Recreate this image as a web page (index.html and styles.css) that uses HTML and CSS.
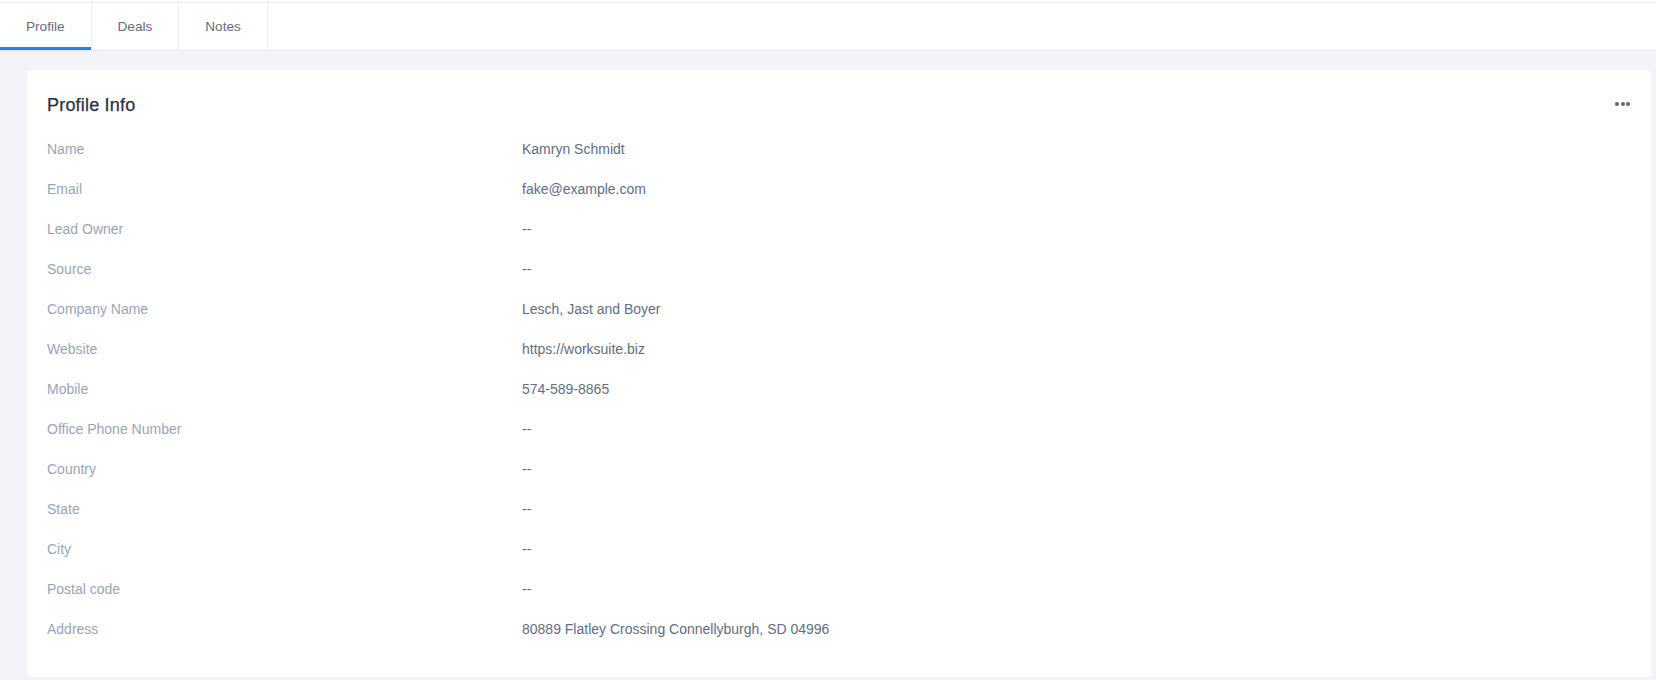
FILE: index.html
```html
<!DOCTYPE html>
<html>
<head>
<meta charset="utf-8">
<title>Profile</title>
<link rel="stylesheet" href="styles.css">
</head>
<body>
<header class="header">
  <nav class="tabs">
    <a class="tab active">Profile</a>
    <a class="tab">Deals</a>
    <a class="tab">Notes</a>
  </nav>
</header>
<main class="content">
  <section class="card">
    <div class="card-head">
      <h2 class="card-title">Profile Info</h2>
      <button class="more" aria-label="More">
        <span class="dot"></span><span class="dot"></span><span class="dot"></span>
      </button>
    </div>
    <dl class="info">
      <dt>Name</dt><dd>Kamryn Schmidt</dd>
      <dt>Email</dt><dd>fake@example.com</dd>
      <dt>Lead Owner</dt><dd>--</dd>
      <dt>Source</dt><dd>--</dd>
      <dt>Company Name</dt><dd>Lesch, Jast and Boyer</dd>
      <dt>Website</dt><dd>https://worksuite.biz</dd>
      <dt>Mobile</dt><dd>574-589-8865</dd>
      <dt>Office Phone Number</dt><dd>--</dd>
      <dt>Country</dt><dd>--</dd>
      <dt>State</dt><dd>--</dd>
      <dt>City</dt><dd>--</dd>
      <dt>Postal code</dt><dd>--</dd>
      <dt>Address</dt><dd>80889 Flatley Crossing Connellyburgh, SD 04996</dd>
    </dl>
  </section>
</main>
</body>
</html>
```

FILE: styles.css
```css
* { box-sizing: border-box; }
html, body { margin: 0; padding: 0; }
body {
  background: #f2f4f7;
  font-family: "Liberation Sans", Arial, Helvetica, sans-serif;
  font-size: 14px;
  color: #616e80;
  height: 680px;
  overflow: hidden;
}
.header {
  background: #ffffff;
  padding-top: 2px;
  border-bottom: 1px solid #e3e9f0;
}
.tabs {
  display: flex;
  height: 48px;
  border-top: 1px solid #e8eef3;
}
.tab {
  display: flex;
  align-items: center;
  padding: 0 26px 0 26px;
  border-right: 1px solid #e8eef3;
  color: #616e80;
  font-size: 13.6px;
  position: relative;
  cursor: pointer;
}
.tab.active::after {
  content: "";
  position: absolute;
  left: 0;
  right: 0;
  bottom: 0;
  height: 3px;
  background: #1d82f5;
}
.content {
  padding: 19px 5px 0 27px;
}
.card {
  background: #ffffff;
  border-radius: 4px;
  padding: 23px 20px 26px 20px;
  height: 607px;
}
.card-head {
  display: flex;
  align-items: center;
  justify-content: space-between;
  height: 24px;
  margin-bottom: 12px;
}
.card-title {
  margin: 0;
  font-size: 18px;
  font-weight: normal;
  line-height: 24px;
  color: #28313c;
  letter-spacing: 0.2px;
  -webkit-text-stroke: 0.25px #28313c;
}
.more {
  display: flex;
  gap: 1.5px;
  align-items: center;
  padding: 0;
  border: 0;
  background: none;
  margin-right: 1px;
  margin-top: -2px;
}
.dot {
  width: 4px;
  height: 4px;
  border-radius: 50%;
  background: #5b6779;
}
.info {
  margin: 0;
  display: grid;
  grid-template-columns: 475px 1fr;
  grid-auto-rows: 40px;
}
.info dt, .info dd {
  margin: 0;
  line-height: 40px;
  font-size: 14px;
}
.info dt { color: #99a5b5; }
.info dd { color: #616e80; }
```
